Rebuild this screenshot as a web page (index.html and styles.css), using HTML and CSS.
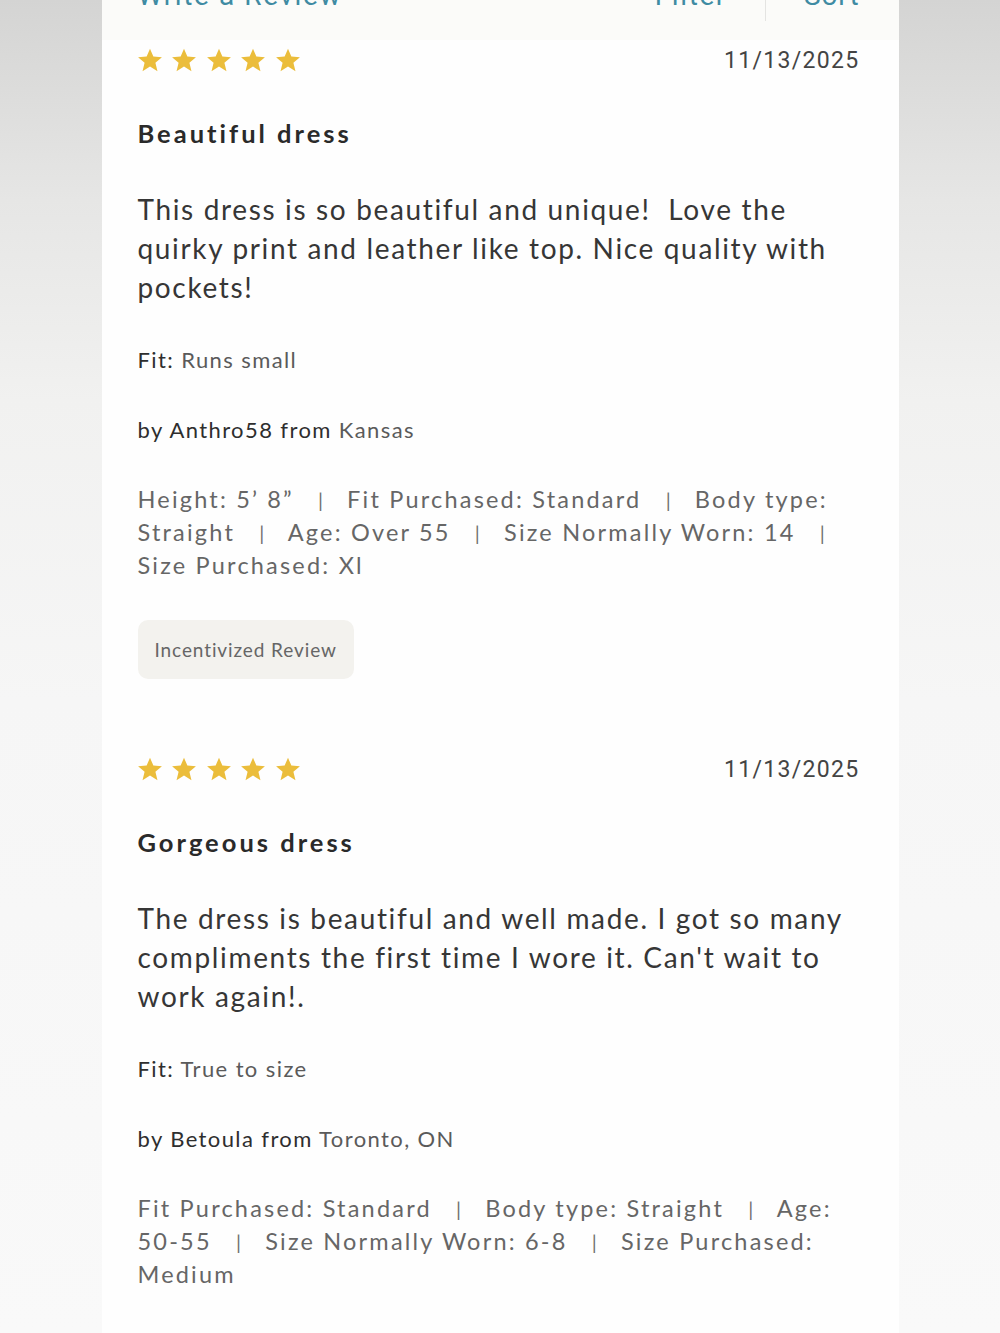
FILE: index.html
```html
<!DOCTYPE html>
<html lang="en">
<head>
<meta charset="utf-8">
<title>Reviews</title>
<link rel="stylesheet" href="styles.css">
</head>
<body>
<div class="panel">
  <div class="toolbar">
    <span class="tool-link">Write a Review</span>
    <div class="tool-right">
      <span class="tool-link filter">Filter</span>
      <span class="tool-link sort">Sort</span>
    </div>
  </div>

  <article class="review">
    <div class="review-top">
      <div class="stars" aria-label="5 stars">
        <svg viewBox="0 0 24 24" class="star"><path d="M12 1.5l3.1 7.3 7.9.6-6 5.2 1.9 7.7L12 18.1l-6.9 4.2 1.9-7.7-6-5.2 7.9-.6z"/></svg>
        <svg viewBox="0 0 24 24" class="star"><path d="M12 1.5l3.1 7.3 7.9.6-6 5.2 1.9 7.7L12 18.1l-6.9 4.2 1.9-7.7-6-5.2 7.9-.6z"/></svg>
        <svg viewBox="0 0 24 24" class="star"><path d="M12 1.5l3.1 7.3 7.9.6-6 5.2 1.9 7.7L12 18.1l-6.9 4.2 1.9-7.7-6-5.2 7.9-.6z"/></svg>
        <svg viewBox="0 0 24 24" class="star"><path d="M12 1.5l3.1 7.3 7.9.6-6 5.2 1.9 7.7L12 18.1l-6.9 4.2 1.9-7.7-6-5.2 7.9-.6z"/></svg>
        <svg viewBox="0 0 24 24" class="star"><path d="M12 1.5l3.1 7.3 7.9.6-6 5.2 1.9 7.7L12 18.1l-6.9 4.2 1.9-7.7-6-5.2 7.9-.6z"/></svg>
      </div>
      <span class="date">11/13/2025</span>
    </div>
    <h2 class="title">Beautiful dress</h2>
    <p class="body">This dress is so beautiful and unique!&nbsp; Love the quirky print and leather like top. Nice quality with pockets!</p>
    <p class="meta"><span class="label">Fit:</span> Runs small</p>
    <p class="meta author"><span class="label">by Anthro58 from</span> Kansas</p>
    <p class="details">Height: 5’&nbsp;8” <span class="sep">|</span> Fit Purchased: Standard <span class="sep">|</span> Body type: Straight <span class="sep">|</span> Age: Over 55 <span class="sep">|</span> Size Normally Worn: 14 <span class="sep">|</span> Size Purchased: Xl</p>
    <span class="badge">Incentivized Review</span>
  </article>

  <article class="review">
    <div class="review-top">
      <div class="stars" aria-label="5 stars">
        <svg viewBox="0 0 24 24" class="star"><path d="M12 1.5l3.1 7.3 7.9.6-6 5.2 1.9 7.7L12 18.1l-6.9 4.2 1.9-7.7-6-5.2 7.9-.6z"/></svg>
        <svg viewBox="0 0 24 24" class="star"><path d="M12 1.5l3.1 7.3 7.9.6-6 5.2 1.9 7.7L12 18.1l-6.9 4.2 1.9-7.7-6-5.2 7.9-.6z"/></svg>
        <svg viewBox="0 0 24 24" class="star"><path d="M12 1.5l3.1 7.3 7.9.6-6 5.2 1.9 7.7L12 18.1l-6.9 4.2 1.9-7.7-6-5.2 7.9-.6z"/></svg>
        <svg viewBox="0 0 24 24" class="star"><path d="M12 1.5l3.1 7.3 7.9.6-6 5.2 1.9 7.7L12 18.1l-6.9 4.2 1.9-7.7-6-5.2 7.9-.6z"/></svg>
        <svg viewBox="0 0 24 24" class="star"><path d="M12 1.5l3.1 7.3 7.9.6-6 5.2 1.9 7.7L12 18.1l-6.9 4.2 1.9-7.7-6-5.2 7.9-.6z"/></svg>
      </div>
      <span class="date">11/13/2025</span>
    </div>
    <h2 class="title">Gorgeous dress</h2>
    <p class="body">The dress is beautiful and well made. I got so many compliments the first time I wore it. Can't wait to work again!.</p>
    <p class="meta"><span class="label">Fit:</span> True to size</p>
    <p class="meta author"><span class="label">by Betoula from</span> Toronto, ON</p>
    <p class="details">Fit Purchased: Standard <span class="sep">|</span> Body type: Straight <span class="sep">|</span> Age: 50-55 <span class="sep">|</span> Size Normally Worn: 6-8 <span class="sep">|</span> Size Purchased: Medium</p>
  </article>
</div>
</body>
</html>
```

FILE: styles.css
```css
html, body {
  margin: 0;
  padding: 0;
}
body {
  height: 1333px;
  background: linear-gradient(to bottom, #d4d4d3 0px, #e6e6e5 200px, #f1f1f0 400px, #f6f6f6 700px, #f9f9f9 1333px);
  font-family: "Lato", "Noto Sans", sans-serif;
  overflow: hidden;
}
.panel {
  width: 797px;
  margin: 0 auto;
  background: #fefefe;
  min-height: 1400px;
  box-sizing: border-box;
  padding: 0 39px 0 36px;
}
.toolbar {
  margin: -22px -39px 0 -36px;
  padding: 3px 39px 0 36px;
  height: 62px;
  box-sizing: border-box;
  background: #fbfbf9;
  display: flex;
  justify-content: space-between;
  align-items: flex-start;
}
.tool-link {
  font-family: "Roboto", "Liberation Sans", sans-serif;
  font-size: 28px;
  line-height: 30px;
  color: #3f8ba3;
  letter-spacing: 1.6px;
}
.tool-right {
  display: flex;
  align-items: flex-start;
}
.filter {
  padding-right: 38px;
}
.sort {
  border-left: 1px solid #e4e4e2;
  padding-left: 38px;
  height: 43px;
  margin-top: -3px;
  padding-top: 3px;
  box-sizing: border-box;
  letter-spacing: 0.9px;
}
.review {
  padding-top: 5px;
}
.review + .review {
  padding-top: 75px;
}
.review-top {
  display: flex;
  justify-content: space-between;
  align-items: center;
  height: 30px;
}
.stars {
  display: flex;
  gap: 8.5px;
  margin-left: -1px;
}
.star {
  width: 26px;
  height: 26px;
  fill: #ebbd3b;
}
.date {
  font-family: "Roboto", "Liberation Sans", sans-serif;
  font-size: 23px;
  color: #444;
  letter-spacing: 1.3px;
}
.title {
  margin: 41px 0 0;
  font-size: 25.5px;
  line-height: 34px;
  font-weight: 700;
  color: #2a2a2a;
  letter-spacing: 3px;
}
.body {
  margin: 40px 0 0;
  font-size: 28px;
  line-height: 39px;
  color: #363636;
  letter-spacing: 1.65px;
}
.meta {
  margin: 38px 0 0;
  font-size: 22px;
  line-height: 30px;
  color: #5a5a5a;
  letter-spacing: 1.4px;
}
.meta.author {
  margin-top: 40px;
}
.label {
  color: #2e2e2e;
}
.details {
  margin: 38px 0 0;
  font-size: 23.5px;
  line-height: 33px;
  color: #666;
  letter-spacing: 2.2px;
}
.sep {
  margin: 0 16px;
  font-size: 20px;
  line-height: 0;
  color: #707070;
  letter-spacing: 0;
}
.badge {
  display: inline-block;
  margin-top: 38px;
  padding: 0 17px;
  height: 59px;
  line-height: 59px;
  background: #f3f2ee;
  border-radius: 10px;
  font-size: 19px;
  color: #666;
  letter-spacing: 0.9px;
}
```
